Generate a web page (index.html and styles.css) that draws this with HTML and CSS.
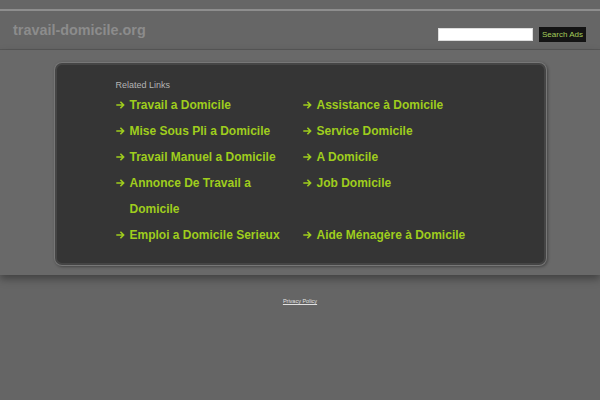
FILE: index.html
```html
<!DOCTYPE html>
<html>
<head>
<meta charset="utf-8">
<title>travail-domicile.org</title>
<link rel="stylesheet" href="styles.css">
</head>
<body>
<div class="top"></div>
<header class="header">
  <div class="logo">travail-domicile.org</div>
  <form class="search">
    <input class="search-input" type="text">
    <button class="search-btn" type="button">Search Ads</button>
  </form>
</header>
<main class="band">
  <div class="box">
    <div class="related">Related Links</div>
    <ul class="links">
      <li><span class="arr"><svg width="9" height="8" viewBox="0 0 9 8"><path d="M0.3 4H7.6M4.4 0.8L7.6 4L4.4 7.2" fill="none" stroke="#9fcd1d" stroke-width="1.6"/></svg></span><a>Travail a Domicile</a></li>
      <li><span class="arr"><svg width="9" height="8" viewBox="0 0 9 8"><path d="M0.3 4H7.6M4.4 0.8L7.6 4L4.4 7.2" fill="none" stroke="#9fcd1d" stroke-width="1.6"/></svg></span><a>Assistance à Domicile</a></li>
      <li><span class="arr"><svg width="9" height="8" viewBox="0 0 9 8"><path d="M0.3 4H7.6M4.4 0.8L7.6 4L4.4 7.2" fill="none" stroke="#9fcd1d" stroke-width="1.6"/></svg></span><a>Mise Sous Pli a Domicile</a></li>
      <li><span class="arr"><svg width="9" height="8" viewBox="0 0 9 8"><path d="M0.3 4H7.6M4.4 0.8L7.6 4L4.4 7.2" fill="none" stroke="#9fcd1d" stroke-width="1.6"/></svg></span><a>Service Domicile</a></li>
      <li><span class="arr"><svg width="9" height="8" viewBox="0 0 9 8"><path d="M0.3 4H7.6M4.4 0.8L7.6 4L4.4 7.2" fill="none" stroke="#9fcd1d" stroke-width="1.6"/></svg></span><a>Travail Manuel a Domicile</a></li>
      <li><span class="arr"><svg width="9" height="8" viewBox="0 0 9 8"><path d="M0.3 4H7.6M4.4 0.8L7.6 4L4.4 7.2" fill="none" stroke="#9fcd1d" stroke-width="1.6"/></svg></span><a>A Domicile</a></li>
      <li><span class="arr"><svg width="9" height="8" viewBox="0 0 9 8"><path d="M0.3 4H7.6M4.4 0.8L7.6 4L4.4 7.2" fill="none" stroke="#9fcd1d" stroke-width="1.6"/></svg></span><a>Annonce De Travail a Domicile</a></li>
      <li><span class="arr"><svg width="9" height="8" viewBox="0 0 9 8"><path d="M0.3 4H7.6M4.4 0.8L7.6 4L4.4 7.2" fill="none" stroke="#9fcd1d" stroke-width="1.6"/></svg></span><a>Job Domicile</a></li>
      <li><span class="arr"><svg width="9" height="8" viewBox="0 0 9 8"><path d="M0.3 4H7.6M4.4 0.8L7.6 4L4.4 7.2" fill="none" stroke="#9fcd1d" stroke-width="1.6"/></svg></span><a>Emploi a Domicile Serieux</a></li>
      <li><span class="arr"><svg width="9" height="8" viewBox="0 0 9 8"><path d="M0.3 4H7.6M4.4 0.8L7.6 4L4.4 7.2" fill="none" stroke="#9fcd1d" stroke-width="1.6"/></svg></span><a>Aide Ménagère à Domicile</a></li>
    </ul>
  </div>
</main>
<footer class="footer"><a class="privacy">Privacy Policy</a></footer>
</body>
</html>
```
FILE: styles.css
```css
html, body {
  margin: 0;
  padding: 0;
  background: #656565;
  font-family: "Liberation Sans", Arial, sans-serif;
}
.top {
  height: 9px;
  border-bottom: 2px solid #8e8e8e;
  background: #666;
}
.header {
  height: 38px;
  border-bottom: 1px solid #585858;
  background: #666;
  display: flex;
  justify-content: space-between;
  align-items: flex-start;
  padding: 0 14px 0 13px;
}
.logo {
  font-size: 14.4px;
  font-weight: bold;
  color: #8c8c8c;
  line-height: 16px;
  margin-top: 11px;
}
.search {
  display: flex;
  align-items: center;
  gap: 6px;
  margin: 16px 0 0;
}
.search-input {
  width: 95px;
  height: 13px;
  box-sizing: border-box;
  border: 1px solid #ddd;
  background: #fff;
  padding: 0;
  margin: 0;
}
.search-btn {
  height: 15px;
  width: 47px;
  padding: 0;
  margin: 0;
  border: none;
  background: #141414;
  color: #a3cc5a;
  font-family: "Liberation Sans", Arial, sans-serif;
  font-size: 8px;
  line-height: 15px;
}
.band {
  display: block;
  background: #696969;
  padding: 13px 0 10px;
  box-shadow: 0 4px 8px rgba(0, 0, 0, 0.35);
  position: relative;
}
.box {
  width: 491px;
  margin: 0 auto;
  box-sizing: border-box;
  background: #353535;
  border: 2px solid #454545;
  border-radius: 7px;
  box-shadow: 0 0 0 1px #777, 1px 1px 3px 1px rgba(0, 0, 0, 0.35);
  padding: 14px 0 15px 59px;
  min-height: 201px;
}
.related {
  font-size: 9px;
  line-height: 12px;
  color: #b4b4b4;
  margin-bottom: 1px;
}
.links {
  list-style: none;
  margin: 0;
  padding: 0;
  display: grid;
  grid-template-columns: 187px 187px;
}
.links li {
  display: flex;
  align-items: flex-start;
  font-size: 12px;
  font-weight: bold;
  line-height: 26px;
  color: #9fcd1d;
  padding-right: 12px;
}
.arr {
  flex: none;
  width: 14px;
  height: 26px;
  display: flex;
  align-items: center;
}
.arr svg {
  display: block;
  margin-top: -1px;
}
.links a {
  color: #9fcd1d;
}
.footer {
  text-align: center;
  padding-top: 14px;
}
.privacy {
  font-size: 5.5px;
  color: #e0e0e0;
  text-decoration: underline;
}
```
